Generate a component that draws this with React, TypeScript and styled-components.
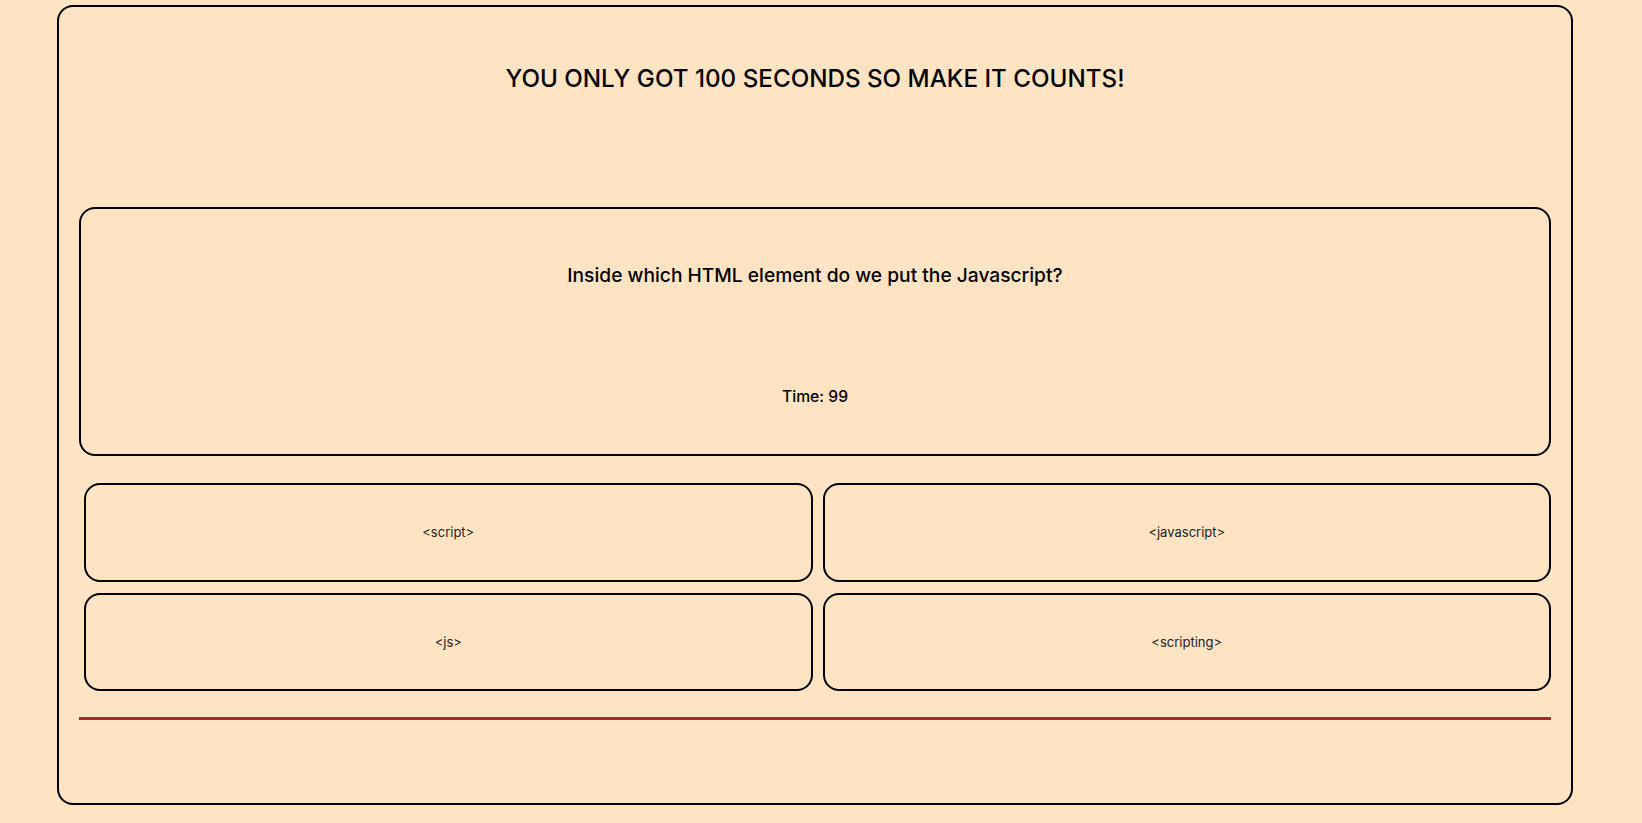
import React from "react";
import styled, { createGlobalStyle } from "styled-components";

const GlobalStyle = createGlobalStyle`
  html, body {
    margin: 0;
    padding: 0;
    background: #ffe4c4;
  }
  body {
    font-family: Inter, "Noto Sans", sans-serif;
    color: #000;
  }
`;

const Frame = styled.div`
  box-sizing: border-box;
  width: 1516px;
  height: 800px;
  margin: 5px 0 0 57px;
  padding: 0 20px;
  border: 2px solid #000;
  border-radius: 16px;
  display: flex;
  flex-direction: column;
`;

const Title = styled.h2`
  margin: 57px 0 0;
  font-size: 24.2px;
  line-height: 30px;
  font-weight: 500;
  text-align: center;
`;

const QuestionCard = styled.section`
  box-sizing: border-box;
  margin-top: 113px;
  height: 249px;
  border: 2px solid #000;
  border-radius: 16px;
  display: flex;
  flex-direction: column;
  align-items: center;
`;

const Question = styled.h3`
  margin: 54px 0 0;
  font-size: 19.2px;
  line-height: 24px;
  font-weight: 500;
  text-align: center;
`;

const Timer = styled.p`
  margin: 100px 0 0;
  font-size: 15.7px;
  line-height: 20px;
  font-weight: 500;
`;

const Answers = styled.div`
  margin-top: 27px;
  padding-left: 5px;
  display: grid;
  grid-template-columns: 1fr 1fr;
  grid-auto-rows: 98.5px;
  column-gap: 10px;
  row-gap: 11px;
`;

const AnswerButton = styled.button`
  box-sizing: border-box;
  border: 2px solid #000;
  border-radius: 16px;
  background: transparent;
  font-family: Inter, "Noto Sans", sans-serif;
  font-size: 13px;
  font-weight: 400;
  color: #222;
  cursor: pointer;
  padding: 0;
`;

const Divider = styled.hr`
  margin: 26px 0 0;
  border: none;
  height: 3px;
  background: #a52a2a;
`;

const answers = ["<script>", "<javascript>", "<js>", "<scripting>"];

export default function App() {
  return (
    <>
      <GlobalStyle />
      <Frame>
        <Title>YOU ONLY GOT 100 SECONDS SO MAKE IT COUNTS!</Title>
        <QuestionCard>
          <Question>Inside which HTML element do we put the Javascript?</Question>
          <Timer>Time: 99</Timer>
        </QuestionCard>
        <Answers>
          {answers.map((a) => (
            <AnswerButton key={a}>{a}</AnswerButton>
          ))}
        </Answers>
        <Divider />
      </Frame>
    </>
  );
}
